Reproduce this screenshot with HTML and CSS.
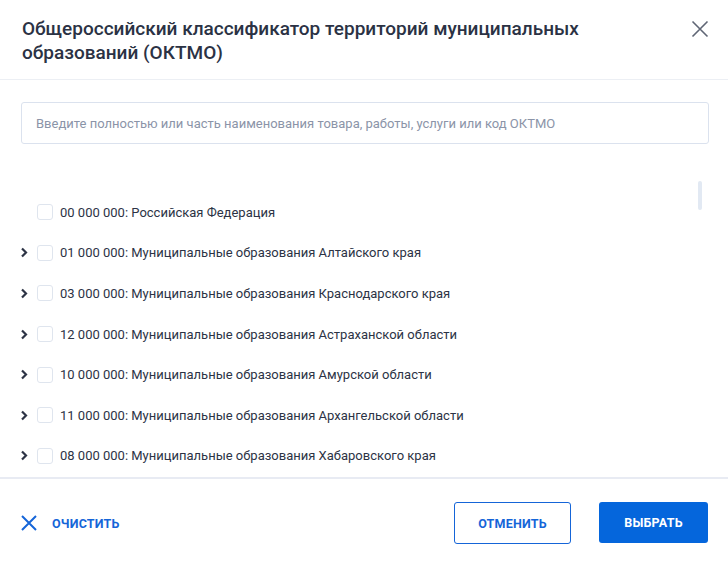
FILE: index.html
```html
<!DOCTYPE html>
<html lang="ru">
<head>
<meta charset="utf-8">
<link rel="stylesheet" href="styles.css">
</head>
<body>
<div class="modal">
  <header class="header">
    <h1 class="title">Общероссийский классификатор территорий муниципальных образований (ОКТМО)</h1>
    <button class="close" aria-label="Закрыть">
      <svg width="18" height="18" viewBox="0 0 18 18"><path d="M1.5 1.5L16.5 16.5M16.5 1.5L1.5 16.5" stroke="#5f6675" stroke-width="1.6" fill="none"/></svg>
    </button>
  </header>
  <div class="content">
    <div class="search">Введите полностью или часть наименования товара, работы, услуги или код ОКТМО</div>
    <div class="list-wrap">
      <ul class="list">
        <li class="row"><span class="chev empty"></span><span class="check"></span><span class="label">00 000 000: Российская Федерация</span></li>
        <li class="row"><span class="chev"><svg width="9" height="11" viewBox="0 0 9 11"><path d="M2 1.5L6 5.5L2 9.5" stroke="#2c3345" stroke-width="2.2" fill="none"/></svg></span><span class="check"></span><span class="label">01 000 000: Муниципальные образования Алтайского края</span></li>
        <li class="row"><span class="chev"><svg width="9" height="11" viewBox="0 0 9 11"><path d="M2 1.5L6 5.5L2 9.5" stroke="#2c3345" stroke-width="2.2" fill="none"/></svg></span><span class="check"></span><span class="label">03 000 000: Муниципальные образования Краснодарского края</span></li>
        <li class="row"><span class="chev"><svg width="9" height="11" viewBox="0 0 9 11"><path d="M2 1.5L6 5.5L2 9.5" stroke="#2c3345" stroke-width="2.2" fill="none"/></svg></span><span class="check"></span><span class="label">12 000 000: Муниципальные образования Астраханской области</span></li>
        <li class="row"><span class="chev"><svg width="9" height="11" viewBox="0 0 9 11"><path d="M2 1.5L6 5.5L2 9.5" stroke="#2c3345" stroke-width="2.2" fill="none"/></svg></span><span class="check"></span><span class="label">10 000 000: Муниципальные образования Амурской области</span></li>
        <li class="row"><span class="chev"><svg width="9" height="11" viewBox="0 0 9 11"><path d="M2 1.5L6 5.5L2 9.5" stroke="#2c3345" stroke-width="2.2" fill="none"/></svg></span><span class="check"></span><span class="label">11 000 000: Муниципальные образования Архангельской области</span></li>
        <li class="row"><span class="chev"><svg width="9" height="11" viewBox="0 0 9 11"><path d="M2 1.5L6 5.5L2 9.5" stroke="#2c3345" stroke-width="2.2" fill="none"/></svg></span><span class="check"></span><span class="label">08 000 000: Муниципальные образования Хабаровского края</span></li>
      </ul>
      <div class="thumb"></div>
    </div>
  </div>
  <footer class="footer">
    <button class="clear">
      <svg width="16" height="16" viewBox="0 0 16 16"><path d="M1 1L15 15M15 1L1 15" stroke="#1565d8" stroke-width="2" fill="none"/></svg>
      <span>ОЧИСТИТЬ</span>
    </button>
    <div class="actions">
      <button class="btn btn-outline">ОТМЕНИТЬ</button>
      <button class="btn btn-primary">ВЫБРАТЬ</button>
    </div>
  </footer>
</div>
</body>
</html>
```
FILE: styles.css
```css
* { box-sizing: border-box; }
html, body { margin: 0; padding: 0; background: #fff; }
body { font-family: Roboto, "Noto Sans", sans-serif; color: #2c3345; }
.modal { width: 728px; height: 564px; display: flex; flex-direction: column; background: #fff; }
.header {
  height: 80px;
  display: flex;
  align-items: flex-start;
  justify-content: space-between;
  padding: 17px 19px 0 22px;
  border-bottom: 1px solid #eceff4;
}
.title { margin: 0; font-size: 19px; line-height: 24px; font-weight: 500; color: #2b3244; width: 600px; }
.close { border: 0; background: none; padding: 0; margin-top: 3px; width: 18px; height: 18px; cursor: pointer; }
.content { flex: 1; display: flex; flex-direction: column; padding: 22px 19px 0 21px; min-height: 0; }
.search {
  height: 42px;
  border: 1px solid #dbe2ee;
  border-radius: 3px;
  padding: 0 14px;
  display: flex;
  align-items: center;
  font-size: 13px;
  color: #8b94a8;
}
.list-wrap { flex: 1; position: relative; margin: 0 -19px 0 -21px; padding-top: 48px; overflow: hidden; }
.list { list-style: none; margin: 0; padding: 0 0 0 20px; }
.row { height: 40.6px; display: flex; align-items: center; font-size: 13px; color: #2c3345; }
.chev { width: 17px; display: flex; align-items: center; }
.check { width: 16px; height: 16px; border: 1px solid #dfe5ee; border-radius: 3px; margin-right: 7px; flex: none; }
.label { white-space: nowrap; }
.thumb { position: absolute; right: 26px; top: 37px; width: 4px; height: 29px; border-radius: 2px; background: #e2e9f3; }
.footer {
  height: 87px;
  border-top: 2px solid #e8ebf3;
  display: flex;
  align-items: center;
  justify-content: space-between;
  padding: 3px 20px 0 21px;
}
.clear { display: flex; align-items: center; gap: 15px; border: 0; background: none; padding: 0; font-family: inherit; font-size: 12.5px; font-weight: 700; color: #1565d8; letter-spacing: 0.2px; }
.actions { display: flex; gap: 28px; }
.btn { height: 42px; border-radius: 3px; font-family: inherit; font-size: 12.5px; font-weight: 700; letter-spacing: 0.2px; padding: 0; }
.btn-outline { width: 117px; background: #fff; color: #1565d8; border: 1px solid #1565d8; }
.btn-primary { width: 109px; background: #0566dc; color: #fff; border: 0; height: 41px; }
```
